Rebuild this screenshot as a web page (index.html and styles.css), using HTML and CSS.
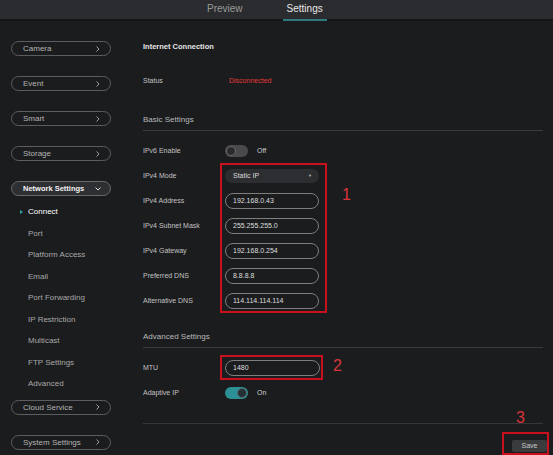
FILE: index.html
```html
<html>
<head>
<title>Network Settings - Connect</title>
<link rel="stylesheet" href="styles.css">
</head>
<body>

<div class="topbar">
	<div class="tab">Preview</div>
	<div class="tab active">Settings</div>
</div>

<div class="layout">

<div class="sidebar">
	<div class="pill">Camera<svg class="chev" width="4" height="6" viewBox="0 0 4 6"><polyline points="0.5,0.5 3,3 0.5,5.5"/></svg></div>
	<div class="pill">Event<svg class="chev" width="4" height="6" viewBox="0 0 4 6"><polyline points="0.5,0.5 3,3 0.5,5.5"/></svg></div>
	<div class="pill">Smart<svg class="chev" width="4" height="6" viewBox="0 0 4 6"><polyline points="0.5,0.5 3,3 0.5,5.5"/></svg></div>
	<div class="pill">Storage<svg class="chev" width="4" height="6" viewBox="0 0 4 6"><polyline points="0.5,0.5 3,3 0.5,5.5"/></svg></div>
	<div class="pill open">Network Settings<svg class="chev" width="6" height="4" viewBox="0 0 6 4"><polyline points="0.5,0.5 3,3 5.5,0.5"/></svg></div>
	<div class="submenu">
		<div class="sub-item active">Connect</div>
		<div class="sub-item">Port</div>
		<div class="sub-item">Platform Access</div>
		<div class="sub-item">Email</div>
		<div class="sub-item">Port Forwarding</div>
		<div class="sub-item">IP Restriction</div>
		<div class="sub-item">Multicast</div>
		<div class="sub-item">FTP Settings</div>
		<div class="sub-item">Advanced</div>
	</div>
	<div class="pill">Cloud Service<svg class="chev" width="4" height="6" viewBox="0 0 4 6"><polyline points="0.5,0.5 3,3 0.5,5.5"/></svg></div>
	<div class="pill">System Settings<svg class="chev" width="4" height="6" viewBox="0 0 4 6"><polyline points="0.5,0.5 3,3 0.5,5.5"/></svg></div>
</div>

<div class="content">
	<h2 class="title">Internet Connection</h2>
	<div class="row status-row"><span class="label">Status</span><span class="status-off">Disconnected</span></div>

	<h3 class="section">Basic Settings</h3>
	<div class="row"><span class="label">IPv6 Enable</span><span class="toggle"><span class="knob"></span></span><span class="toggle-text">Off</span></div>

	<div class="group">
		<div class="group-labels">
			<div>IPv4 Mode</div>
			<div>IPv4 Address</div>
			<div>IPv4 Subnet Mask</div>
			<div>IPv4 Gateway</div>
			<div>Preferred DNS</div>
			<div>Alternative DNS</div>
		</div>
		<div class="mark">
			<div class="field-row"><div class="select"><span>Static IP</span><span class="arrow">&#9660;</span></div></div>
			<div class="field-row"><input class="field" value="192.168.0.43"></div>
			<div class="field-row"><input class="field" value="255.255.255.0"></div>
			<div class="field-row"><input class="field" value="192.168.0.254"></div>
			<div class="field-row"><input class="field" value="8.8.8.8"></div>
			<div class="field-row"><input class="field" value="114.114.114.114"></div>
		</div>
		<span class="note">1</span>
	</div>

	<h3 class="section advanced">Advanced Settings</h3>
	<div class="group">
		<div class="group-labels">
			<div>MTU</div>
		</div>
		<div class="mark short">
			<div class="field-row"><input class="field wide" value="1480"></div>
		</div>
		<span class="note near">2</span>
	</div>
	<div class="row"><span class="label">Adaptive IP</span><span class="toggle on"><span class="knob"></span></span><span class="toggle-text">On</span></div>

	<div class="footer">
		<span class="note step">3</span>
		<div class="mark save-mark"><div class="save">Save</div></div>
	</div>
</div>

</div>

</body>
</html>
```

FILE: styles.css
```css
body{
	margin: 0;
	width: 553px;
	height: 455px;
	overflow: hidden;
	background: #1b1c1e;
	font-family: "Liberation Sans", Arial, sans-serif;
	color: #c2c2c2;
}

/* top tabs */
.topbar{
	display: flex;
	align-items: flex-start;
	gap: 36px;
	height: 19px;
	padding-left: 203px;
	background: #2b2c2f;
	border-bottom: 2px solid #141517;
}
.tab{
	padding: 0 4px;
	height: 19px;
	line-height: 17px;
	font-size: 10px;
	color: #9a9a9a;
}
.tab.active{
	color: #e8e8e8;
	border-bottom: 2px solid #2f7a7f;
}

.layout{
	display: flex;
	height: 434px;
}

/* left menu */
.sidebar{
	width: 130px;
	flex: none;
	padding-top: 20px;
	box-sizing: border-box;
}
.pill{
	display: flex;
	align-items: center;
	justify-content: space-between;
	box-sizing: border-box;
	width: 100px;
	height: 15px;
	margin: 0 0 20px 11px;
	padding: 0 10px 0 11px;
	border: 1px solid #5c5d60;
	border-radius: 8px;
	font-size: 8px;
	color: #b4b4b4;
}
.pill.open{
	margin-bottom: 5px;
	padding-right: 9px;
	background: #2e2f32;
	border-color: #68696c;
	color: #f2f2f2;
	font-weight: bold;
	font-size: 7.5px;
}
.chev polyline{
	fill: none;
	stroke: #9d9d9d;
	stroke-width: 1;
}
.pill.open .chev polyline{
	stroke: #dcdcdc;
}
.submenu{
	margin-bottom: 5px;
}
.sub-item{
	height: 21.5px;
	line-height: 21.5px;
	padding-left: 28px;
	font-size: 8px;
	color: #a8a8a8;
}
.sub-item.active{
	color: #ffffff;
}
.sub-item.active::before{
	content: "";
	display: inline-block;
	margin: 0 5px 0 -8px;
	border-left: 3px solid #2fa3a6;
	border-top: 2.5px solid transparent;
	border-bottom: 2.5px solid transparent;
	vertical-align: 0;
}

/* form */
.content{
	flex: 1;
	padding: 0 10px 0 13px;
}
.title{
	margin: 16px 0 0;
	font-size: 7.5px;
	line-height: 20px;
	font-weight: bold;
	color: #e6e6e6;
}
.row{
	display: flex;
	align-items: center;
	height: 25px;
	font-size: 7px;
}
.status-row{
	margin-top: 10.5px;
}
.label{
	width: 82px;
	flex: none;
}
.status-off{
	padding-left: 4px;
	color: #e23a3a;
}
.section{
	margin: 17.5px 0 7px;
	font-size: 8px;
	line-height: 20px;
	font-weight: normal;
	color: #bababa;
	border-bottom: 1px solid #3a3b3e;
}
.section.advanced{
	margin-top: 14px;
}

.toggle{
	display: flex;
	align-items: center;
	box-sizing: border-box;
	width: 23px;
	height: 12px;
	padding: 0 1px;
	border-radius: 6px;
	background: #4a4a4c;
}
.toggle.on{
	justify-content: flex-end;
	background: #2c9197;
}
.knob{
	box-sizing: border-box;
	width: 10px;
	height: 10px;
	border-radius: 50%;
	background: #2a2a2c;
	border: 1px solid #6a6a6c;
}
.toggle.on .knob{
	background: #243035;
	border-color: #55676b;
}
.toggle-text{
	margin-left: 9px;
	color: #cfcfcf;
}

.group{
	display: flex;
	align-items: flex-start;
	font-size: 7px;
}
.group-labels{
	width: 77px;
	flex: none;
}
.group-labels div{
	display: flex;
	align-items: center;
	height: 25px;
}
.mark{
	box-sizing: border-box;
	width: 107px;
	padding-left: 5px;
	outline: 2px solid #c8111d;
	outline-offset: -2px;
}
.mark.short{
	width: 103px;
}
.field-row{
	display: flex;
	align-items: center;
	height: 25px;
}
.field{
	box-sizing: border-box;
	width: 94px;
	height: 16px;
	padding: 0 0 0 7px;
	border: 1px solid #7e7e7e;
	border-radius: 8px;
	background: #1b1c1e;
	color: #dedede;
	font-family: "Liberation Sans", Arial, sans-serif;
	font-size: 7px;
	outline: none;
}
.field.wide{
	width: 95px;
}
.select{
	display: flex;
	align-items: center;
	justify-content: space-between;
	box-sizing: border-box;
	width: 94px;
	height: 14px;
	padding: 0 7px 0 8px;
	border-radius: 7px;
	background: #2d2e31;
	color: #dcdcdc;
}
.select .arrow{
	font-size: 4px;
	color: #bdbdbd;
}
.note{
	margin: 24px 0 0 15px;
	font-size: 16px;
	line-height: 16px;
	color: #d8343a;
}
.note.near{
	margin: 3px 0 0 10px;
}

.footer{
	position: relative;
	display: flex;
	justify-content: flex-end;
	margin-top: 18px;
	padding-top: 8px;
	border-top: 1px solid #36373a;
}
.note.step{
	position: absolute;
	right: 18px;
	top: -14px;
	margin: 0;
}
.save-mark{
	width: 47px;
	height: 23px;
	margin-right: -6px;
	padding: 8px 0 0 10px;
}
.save{
	width: 35px;
	height: 12px;
	line-height: 12px;
	border-radius: 2px;
	background: #3a3b3d;
	text-align: center;
	font-size: 7px;
	color: #c9c9c9;
}
```
